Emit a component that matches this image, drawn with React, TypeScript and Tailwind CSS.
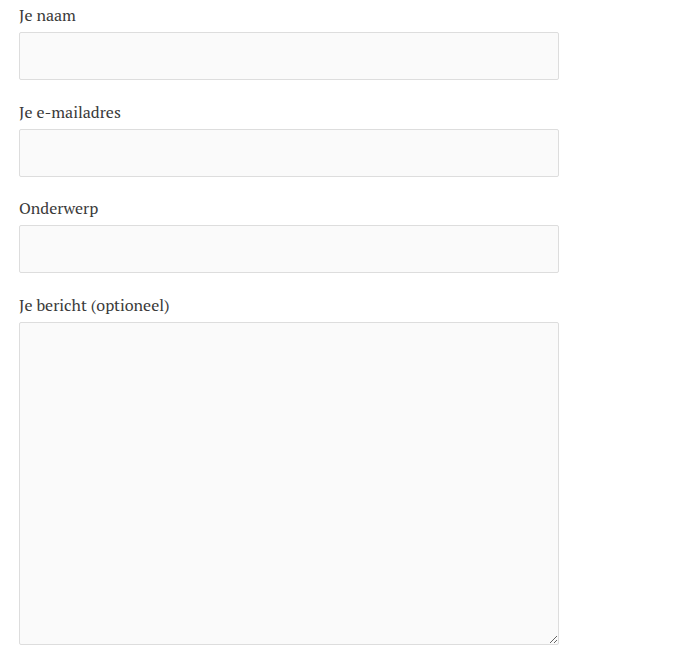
const field =
  'block w-[540px] rounded-[2px] border border-[#dddddd] bg-[#fafafa] px-3 text-[16px] text-[#333] outline-none';

const labelText = 'block pb-[5px] text-[16px] leading-[24px] text-[#3a3a3a]';

function Field({ label, textarea }: { label: string; textarea?: boolean }) {
  return (
    <div className="mb-[19.67px]">
      <label className={labelText}>{label}</label>
      {textarea ? (
        <textarea className={`${field} h-[323px] py-2`} />
      ) : (
        <input type="text" className={`${field} h-[48px]`} />
      )}
    </div>
  );
}

export default function App() {
  return (
    <div
      className="min-h-[661px] bg-white pl-[19px] pt-[3px]"
      style={{ fontFamily: '"PT Serif", "DejaVu Serif", "Liberation Serif", serif' }}
    >
      <Field label="Je naam" />
      <Field label="Je e-mailadres" />
      <Field label="Onderwerp" />
      <Field label="Je bericht (optioneel)" textarea />
    </div>
  );
}
